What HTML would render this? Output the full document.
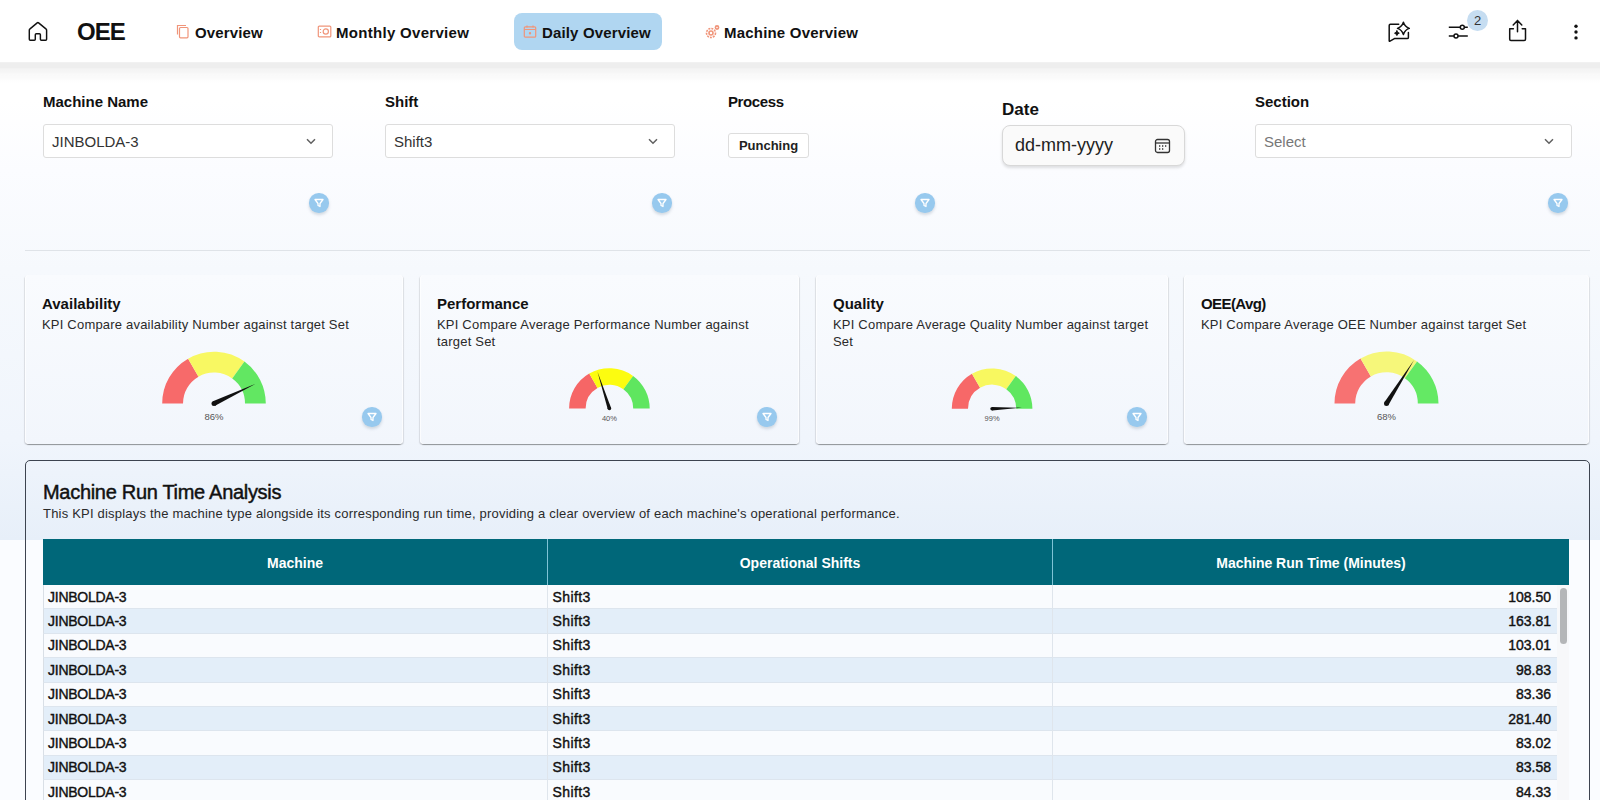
<!DOCTYPE html>
<html><head><meta charset="utf-8">
<style>
*{box-sizing:border-box;margin:0;padding:0}
html,body{width:1600px;height:800px;overflow:hidden}
body{font-family:"Liberation Sans",sans-serif;color:#111;position:relative;background:#fafcff}
.bg{position:absolute;left:0;top:0;width:1600px;height:540px;background:linear-gradient(180deg,#ffffff 0px,#ffffff 100px,#fbfcff 170px,#f6f9fd 270px,#f0f5fc 440px,#e7eff9 540px)}
.abs{position:absolute}
.hdr{position:absolute;left:0;top:0;width:1600px;height:62px;background:#fff;z-index:5}
.hsh{position:absolute;left:0;top:62px;width:1600px;height:22px;z-index:4;background:linear-gradient(180deg,rgba(0,0,0,0.05) 0px,rgba(0,0,0,0.068) 1.5px,rgba(0,0,0,0.068) 5.5px,rgba(0,0,0,0.045) 7px,rgba(0,0,0,0.04) 10px,rgba(0,0,0,0.022) 12px,rgba(0,0,0,0.018) 16px,rgba(0,0,0,0.008) 18px,rgba(0,0,0,0) 22px)}
.nav{position:absolute;font-weight:bold;font-size:15px;color:#111;white-space:nowrap;line-height:18px}
.lbl{position:absolute;font-weight:bold;font-size:15px;color:#111;white-space:nowrap;line-height:18px;margin-top:-1px}
.sel{position:absolute;height:34px;background:#fff;border:1px solid #dddddd;border-radius:3px;font-size:15px;color:#333}
.sel span{position:absolute;left:8px;top:7.5px;line-height:18px}
.sel svg{position:absolute;top:13px}
.fbtn{position:absolute;width:19.5px;height:19.5px;border-radius:50%;background:#97c9ee;box-shadow:0 2px 3px rgba(120,140,160,0.3)}
.fbtn svg{position:absolute;left:4.8px;top:5px}
.card{position:absolute;top:275px;height:169px;background:linear-gradient(180deg,#f9fbfe,#f2f6fc);border-radius:4px;box-shadow:0 2px 1px -1px rgba(0,0,0,0.2),0 1px 1px 0 rgba(0,0,0,0.07),1px 1px 1px -0.5px rgba(0,0,0,0.1),-1px 1px 1px -0.5px rgba(0,0,0,0.1),inset 1px 0 0 rgba(255,255,255,0.7),inset -1px 0 0 rgba(255,255,255,0.7)}
.ct{position:absolute;left:17px;top:20px;font-weight:bold;font-size:15px;line-height:18px;white-space:nowrap}
.cd{position:absolute;left:17px;top:41px;font-size:13px;line-height:17px;color:#2a2a2a;letter-spacing:0.2px;white-space:nowrap}
.gl{position:absolute;font-size:9px;color:#444;text-align:center;width:40px}
.tcard{position:absolute;left:25px;top:460px;width:1565px;height:400px;border:1px solid #3d4450;border-radius:5px}
.thd{position:absolute;top:539px;height:46px;background:#006779;color:#fff;font-weight:bold;font-size:14px;line-height:48px;text-align:center}
.row{position:absolute;left:43px;width:1514px;height:24.4px;font-size:14px;font-weight:normal;-webkit-text-stroke:0.4px #111;color:#111;border-bottom:1px solid #dde5ee;border-left:1px solid #d9dfe6;letter-spacing:-0.25px}
.row span{position:absolute;top:3.5px;line-height:17px}
.rw{background:#f9fbfe}
.rb{background:#e3eef9}
.c1{left:4px}.c2{left:508.5px;letter-spacing:0.4px}.c3{right:6px;letter-spacing:0}
.row:before{content:"";position:absolute;left:503px;top:0;bottom:-1px;width:1px;background:#dfe5ec}
.row:after{content:"";position:absolute;left:1008px;top:0;bottom:-1px;width:1px;background:#dfe5ec}
</style></head><body>
<div class="bg"></div>
<div class="hsh"></div>
<div class="hdr">
  <svg class="abs" style="left:27px;top:21px" width="22" height="22" viewBox="0 0 22 22" fill="none" stroke="#111" stroke-width="1.45" stroke-linejoin="round">
    <path d="M2.3 9.2 Q2.3 8.4 3 7.9 L10.2 1.9 Q10.9 1.3 11.6 1.9 L18.9 7.9 Q19.6 8.4 19.6 9.2 V18.2 Q19.6 19.2 18.6 19.2 H14.4 Q13.4 19.2 13.4 18.2 V13.8 Q13.4 12.8 12.4 12.8 H9.3 Q8.3 12.8 8.3 13.8 V18.2 Q8.3 19.2 7.3 19.2 H3.3 Q2.3 19.2 2.3 18.2 Z"/>
  </svg>
  <div class="nav" style="left:77px;top:20px;font-size:24px;line-height:24px;letter-spacing:-1px">OEE</div>
  <!-- overview icon -->
  <svg class="abs" style="left:176px;top:24px" width="14" height="15" viewBox="0 0 14 15" fill="none" stroke="#f0957a" stroke-width="1.2">
    <path d="M1.5 10.5 V1.5 H10"/><rect x="3.5" y="3.5" width="8.5" height="10.3" rx="1"/>
  </svg>
  <div class="nav" style="left:195px;top:24px;letter-spacing:0.15px">Overview</div>
  <svg class="abs" style="left:317px;top:25px" width="15" height="13" viewBox="0 0 15 13" fill="none" stroke="#f0957a" stroke-width="1.2">
    <rect x="1.3" y="1.1" width="12.5" height="10.8" rx="1"/><circle cx="8.8" cy="6.5" r="2.6"/><path d="M3.5 4v1M3.5 7v1"/>
  </svg>
  <div class="nav" style="left:336px;top:24px;letter-spacing:0.3px">Monthly Overview</div>
  <div class="abs" style="left:514px;top:13px;width:148px;height:37px;background:#b0d6f1;border-radius:8px"></div>
  <svg class="abs" style="left:523px;top:25px" width="14" height="14" viewBox="0 0 14 14" fill="none" stroke="#f0957a" stroke-width="1.2">
    <rect x="1.3" y="1.8" width="11.4" height="10.4" rx="1"/><path d="M1.3 4.5H12.7M4 0.5v2M10 0.5v2"/><circle cx="7" cy="8.3" r="0.6" fill="#f0957a"/>
  </svg>
  <div class="nav" style="left:542px;top:24px;letter-spacing:0.15px">Daily Overview</div>
  <svg class="abs" style="left:704px;top:24px" width="17" height="16" viewBox="0 0 17 16" fill="none" stroke="#f0957a" stroke-width="1.6">
    <circle cx="7" cy="9" r="4.5" stroke-dasharray="2 1"/><circle cx="7" cy="9" r="2"/><circle cx="13" cy="3.5" r="1.6"/>
  </svg>
  <div class="nav" style="left:724px;top:24px;letter-spacing:0.2px">Machine Overview</div>

  <!-- right icons -->
  <svg class="abs" style="left:1387px;top:21px" width="24" height="22" viewBox="0 0 24 22" fill="none" stroke="#111" stroke-width="1.5" stroke-linejoin="round" stroke-linecap="round">
    <path d="M11.7 3.2 H3.4 Q2.2 3.2 2.2 4.4 V19.8 Q2.2 20.6 3 20.1 L7.4 17.6 H20.2 Q21.4 17.6 21.4 16.4 V11.5"/>
    <path d="M16.4 1.3 Q17.9 5.9 22.3 7.4 Q17.9 8.9 16.4 13.5 Q14.9 8.9 10.5 7.4 Q14.9 5.9 16.4 1.3Z"/>
    <path d="M9.9 9.8 Q10.3 11.8 12.3 12.2 Q10.3 12.6 9.9 14.6 Q9.5 12.6 7.5 12.2 Q9.5 11.8 9.9 9.8Z" fill="#111" stroke-width="0.9"/>
  </svg>
  <svg class="abs" style="left:1447px;top:23px" width="23" height="16" viewBox="0 0 23 16" fill="none" stroke="#111" stroke-width="1.5">
    <path d="M1.8 4.3 H13.3 M17.3 4.3 H20.8 M1.8 13 H7 M11 13 H20.8"/>
    <circle cx="15.3" cy="4.3" r="2"/><circle cx="9" cy="13" r="2"/>
  </svg>
  <div class="abs" style="left:1467px;top:10px;width:21px;height:21px;border-radius:50%;background:#c6ddf1;font-size:13px;color:#333;text-align:center;line-height:21px">2</div>
  <svg class="abs" style="left:1507px;top:19px" width="21" height="24" viewBox="0 0 21 24" fill="none" stroke="#111" stroke-width="1.5" stroke-linejoin="round" stroke-linecap="round">
    <path d="M10.5 12.8 V1.6 M6.2 5.9 L10.5 1.5 L14.8 5.9"/>
    <path d="M6.4 9.7 H2.7 V20.2 Q2.7 21.4 3.9 21.4 H17.3 Q18.5 21.4 18.5 20.2 V9.7 H15.2"/>
  </svg>
  <svg class="abs" style="left:1573px;top:22px" width="6" height="20" viewBox="0 0 6 20" fill="#111">
    <circle cx="3" cy="4.2" r="1.7"/><circle cx="3" cy="10" r="1.7"/><circle cx="3" cy="15.9" r="1.7"/>
  </svg>
</div>

<!-- filters -->
<div class="lbl" style="left:43px;top:94px">Machine Name</div>
<div class="sel" style="left:43px;top:124px;width:290px"><span>JINBOLDA-3</span>
<svg style="left:262px" width="10" height="7" viewBox="0 0 10 7" fill="none" stroke="#606060" stroke-width="1.5"><path d="M1 1.2 L5 5.2 L9 1.2"/></svg></div>
<div class="fbtn" style="left:309px;top:193px"><svg width="10" height="10" viewBox="0 0 10 10" fill="none" stroke="#fff" stroke-width="1.3" stroke-linejoin="round"><path d="M1 1.5 H9 L6 5.5 V8.5 L4 7.5 V5.5 Z"/></svg></div>

<div class="lbl" style="left:385px;top:94px">Shift</div>
<div class="sel" style="left:385px;top:124px;width:290px"><span>Shift3</span>
<svg style="left:262px" width="10" height="7" viewBox="0 0 10 7" fill="none" stroke="#606060" stroke-width="1.5"><path d="M1 1.2 L5 5.2 L9 1.2"/></svg></div>
<div class="fbtn" style="left:652px;top:193px"><svg width="10" height="10" viewBox="0 0 10 10" fill="none" stroke="#fff" stroke-width="1.3" stroke-linejoin="round"><path d="M1 1.5 H9 L6 5.5 V8.5 L4 7.5 V5.5 Z"/></svg></div>

<div class="lbl" style="left:728px;top:94px;letter-spacing:-0.4px">Process</div>
<div class="abs" style="left:728px;top:133px;width:81px;height:25px;background:#fff;border:1px solid #dddddd;border-radius:3px;font-size:13px;font-weight:bold;color:#222;text-align:center;line-height:23px">Punching</div>
<div class="fbtn" style="left:915px;top:193px"><svg width="10" height="10" viewBox="0 0 10 10" fill="none" stroke="#fff" stroke-width="1.3" stroke-linejoin="round"><path d="M1 1.5 H9 L6 5.5 V8.5 L4 7.5 V5.5 Z"/></svg></div>

<div class="lbl" style="left:1002px;top:101px;font-size:17px;line-height:20px">Date</div>
<div class="abs" style="left:1002px;top:125px;width:183px;height:41px;background:#fafafa;border:1px solid #d8d8d8;border-radius:8px;box-shadow:0 2px 3px rgba(0,0,0,0.12);font-size:18px;color:#222">
  <span class="abs" style="left:12px;top:9px;line-height:20px">dd-mm-yyyy</span>
  <svg class="abs" style="left:151px;top:12px" width="17" height="16" viewBox="0 0 17 16" fill="none" stroke="#333" stroke-width="1.3">
    <rect x="1.5" y="1.5" width="14" height="13" rx="2"/><path d="M1.5 5 H15.5"/>
    <path d="M5 8h1.3M8 8h1.3M11 8h1.3M5 11h1.3M8 11h1.3" stroke-width="1.5"/>
  </svg>
</div>

<div class="lbl" style="left:1255px;top:94px">Section</div>
<div class="sel" style="left:1255px;top:124px;width:317px"><span style="color:#777">Select</span>
<svg style="left:288px" width="10" height="7" viewBox="0 0 10 7" fill="none" stroke="#606060" stroke-width="1.5"><path d="M1 1.2 L5 5.2 L9 1.2"/></svg></div>
<div class="fbtn" style="left:1548px;top:193px"><svg width="10" height="10" viewBox="0 0 10 10" fill="none" stroke="#fff" stroke-width="1.3" stroke-linejoin="round"><path d="M1 1.5 H9 L6 5.5 V8.5 L4 7.5 V5.5 Z"/></svg></div>

<div class="abs" style="left:25px;top:250px;width:1565px;height:1px;background:#dfe3e8"></div>

<!-- KPI cards -->
<div class="card" style="left:25px;width:378px">
  <div class="ct">Availability</div>
  <div class="cd">KPI Compare availability Number against target Set</div>
</div>
<div class="card" style="left:420px;width:379px">
  <div class="ct">Performance</div>
  <div class="cd">KPI Compare Average Performance Number against<br>target Set</div>
</div>
<div class="card" style="left:816px;width:352px">
  <div class="ct">Quality</div>
  <div class="cd">KPI Compare Average Quality Number against target<br>Set</div>
</div>
<div class="card" style="left:1184px;width:405px">
  <div class="ct" style="letter-spacing:-0.6px">OEE(Avg)</div>
  <div class="cd">KPI Compare Average OEE Number against target Set</div>
</div>
<svg class="abs" style="left:0;top:0" width="1600" height="800" id="gauges">
<path d="M162.20 403.50 A51.8 51.8 0 0 1 188.10 358.64 L198.50 376.65 A31 31 0 0 0 183.00 403.50Z" fill="#f76a6a"/>
<path d="M188.10 358.64 A51.8 51.8 0 0 1 244.45 361.59 L232.22 378.42 A31 31 0 0 0 198.50 376.65Z" fill="#f8f862"/>
<path d="M244.45 361.59 A51.8 51.8 0 0 1 265.80 403.50 L245.00 403.50 A31 31 0 0 0 232.22 378.42Z" fill="#62e762"/>
<path d="M212.94 401.24 L255.71 383.87 L215.06 405.76Z" fill="#111"/><circle cx="214" cy="403.5" r="2.50" fill="#111"/>
<text x="214" y="419.5" font-size="9.5" fill="#555" text-anchor="middle" font-family="Liberation Sans">86%</text>
<path d="M569.10 408.50 A40.3 40.3 0 0 1 589.25 373.60 L597.50 387.89 A23.8 23.8 0 0 0 585.60 408.50Z" fill="#f66666"/>
<path d="M589.25 373.60 A40.3 40.3 0 0 1 633.09 375.90 L623.39 389.25 A23.8 23.8 0 0 0 597.50 387.89Z" fill="#fcfc10"/>
<path d="M633.09 375.90 A40.3 40.3 0 0 1 649.70 408.50 L633.20 408.50 A23.8 23.8 0 0 0 623.39 389.25Z" fill="#5fe65f"/>
<path d="M607.69 409.06 L597.57 372.09 L611.11 407.94Z" fill="#111"/><circle cx="609.4" cy="408.5" r="1.80" fill="#111"/>
<text x="609.4" y="421" font-size="7.5" fill="#555" text-anchor="middle" font-family="Liberation Sans">40%</text>
<path d="M951.80 408.70 A40.3 40.3 0 0 1 971.95 373.80 L980.05 387.83 A24.1 24.1 0 0 0 968.00 408.70Z" fill="#f76868"/>
<path d="M971.95 373.80 A40.3 40.3 0 0 1 1015.79 376.10 L1006.27 389.20 A24.1 24.1 0 0 0 980.05 387.83Z" fill="#f8f860"/>
<path d="M1015.79 376.10 A40.3 40.3 0 0 1 1032.40 408.70 L1016.20 408.70 A24.1 24.1 0 0 0 1006.27 389.20Z" fill="#60e760"/>
<path d="M992.04 406.90 L1021.91 407.76 L992.16 410.50Z" fill="#111"/><circle cx="992.1" cy="408.7" r="1.80" fill="#111"/>
<text x="992.1" y="421" font-size="7.5" fill="#555" text-anchor="middle" font-family="Liberation Sans">99%</text>
<path d="M1334.50 403.50 A52 52 0 0 1 1360.50 358.47 L1370.85 376.39 A31.3 31.3 0 0 0 1355.20 403.50Z" fill="#f77272"/>
<path d="M1360.50 358.47 A52 52 0 0 1 1417.06 361.43 L1404.90 378.18 A31.3 31.3 0 0 0 1370.85 376.39Z" fill="#f6f77a"/>
<path d="M1417.06 361.43 A52 52 0 0 1 1438.50 403.50 L1417.80 403.50 A31.3 31.3 0 0 0 1404.90 378.18Z" fill="#64e964"/>
<path d="M1384.39 402.16 L1414.08 360.03 L1388.61 404.84Z" fill="#111"/><circle cx="1386.5" cy="403.5" r="2.50" fill="#111"/>
<text x="1386.5" y="419.5" font-size="9.5" fill="#555" text-anchor="middle" font-family="Liberation Sans">68%</text>
</svg>
<div class="fbtn" style="left:362px;top:407px"><svg width="10" height="10" viewBox="0 0 10 10" fill="none" stroke="#fff" stroke-width="1.3" stroke-linejoin="round"><path d="M1 1.5 H9 L6 5.5 V8.5 L4 7.5 V5.5 Z"/></svg></div>
<div class="fbtn" style="left:757px;top:407px"><svg width="10" height="10" viewBox="0 0 10 10" fill="none" stroke="#fff" stroke-width="1.3" stroke-linejoin="round"><path d="M1 1.5 H9 L6 5.5 V8.5 L4 7.5 V5.5 Z"/></svg></div>
<div class="fbtn" style="left:1127px;top:407px"><svg width="10" height="10" viewBox="0 0 10 10" fill="none" stroke="#fff" stroke-width="1.3" stroke-linejoin="round"><path d="M1 1.5 H9 L6 5.5 V8.5 L4 7.5 V5.5 Z"/></svg></div>

<!-- table card -->
<div class="tcard"></div>
<div class="abs" style="left:43px;top:480px;font-size:20px;line-height:24px;color:#111;letter-spacing:-0.3px;-webkit-text-stroke:0.45px #111">Machine Run Time Analysis</div>
<div class="abs" style="left:43px;top:505px;font-size:13px;line-height:17px;color:#2a2a2a;letter-spacing:0.2px;white-space:nowrap">This KPI displays the machine type alongside its corresponding run time, providing a clear overview of each machine's operational performance.</div>
<div class="thd" style="left:43px;width:504px">Machine</div><div class="thd" style="left:547px;width:505px;border-left:1px solid #7fc3d6">Operational Shifts</div><div class="thd" style="left:1052px;width:517px;border-left:1px solid #7fc3d6">Machine Run Time (Minutes)</div>
<div class="row rw" style="top:585.0px"><span class="c1">JINBOLDA-3</span><span class="c2">Shift3</span><span class="c3">108.50</span></div>
<div class="row rb" style="top:609.4px"><span class="c1">JINBOLDA-3</span><span class="c2">Shift3</span><span class="c3">163.81</span></div>
<div class="row rw" style="top:633.8px"><span class="c1">JINBOLDA-3</span><span class="c2">Shift3</span><span class="c3">103.01</span></div>
<div class="row rb" style="top:658.2px"><span class="c1">JINBOLDA-3</span><span class="c2">Shift3</span><span class="c3">98.83</span></div>
<div class="row rw" style="top:682.6px"><span class="c1">JINBOLDA-3</span><span class="c2">Shift3</span><span class="c3">83.36</span></div>
<div class="row rb" style="top:707.0px"><span class="c1">JINBOLDA-3</span><span class="c2">Shift3</span><span class="c3">281.40</span></div>
<div class="row rw" style="top:731.4px"><span class="c1">JINBOLDA-3</span><span class="c2">Shift3</span><span class="c3">83.02</span></div>
<div class="row rb" style="top:755.8px"><span class="c1">JINBOLDA-3</span><span class="c2">Shift3</span><span class="c3">83.58</span></div>
<div class="row rw" style="top:780.2px"><span class="c1">JINBOLDA-3</span><span class="c2">Shift3</span><span class="c3">84.33</span></div>
<div class="abs" style="left:1557px;top:584.5px;width:12px;height:220px;background:#f7f8fa"></div><div class="abs" style="left:1560px;top:588px;width:7px;height:56px;background:#b4b6b8;border-radius:4px"></div>
</body></html>
